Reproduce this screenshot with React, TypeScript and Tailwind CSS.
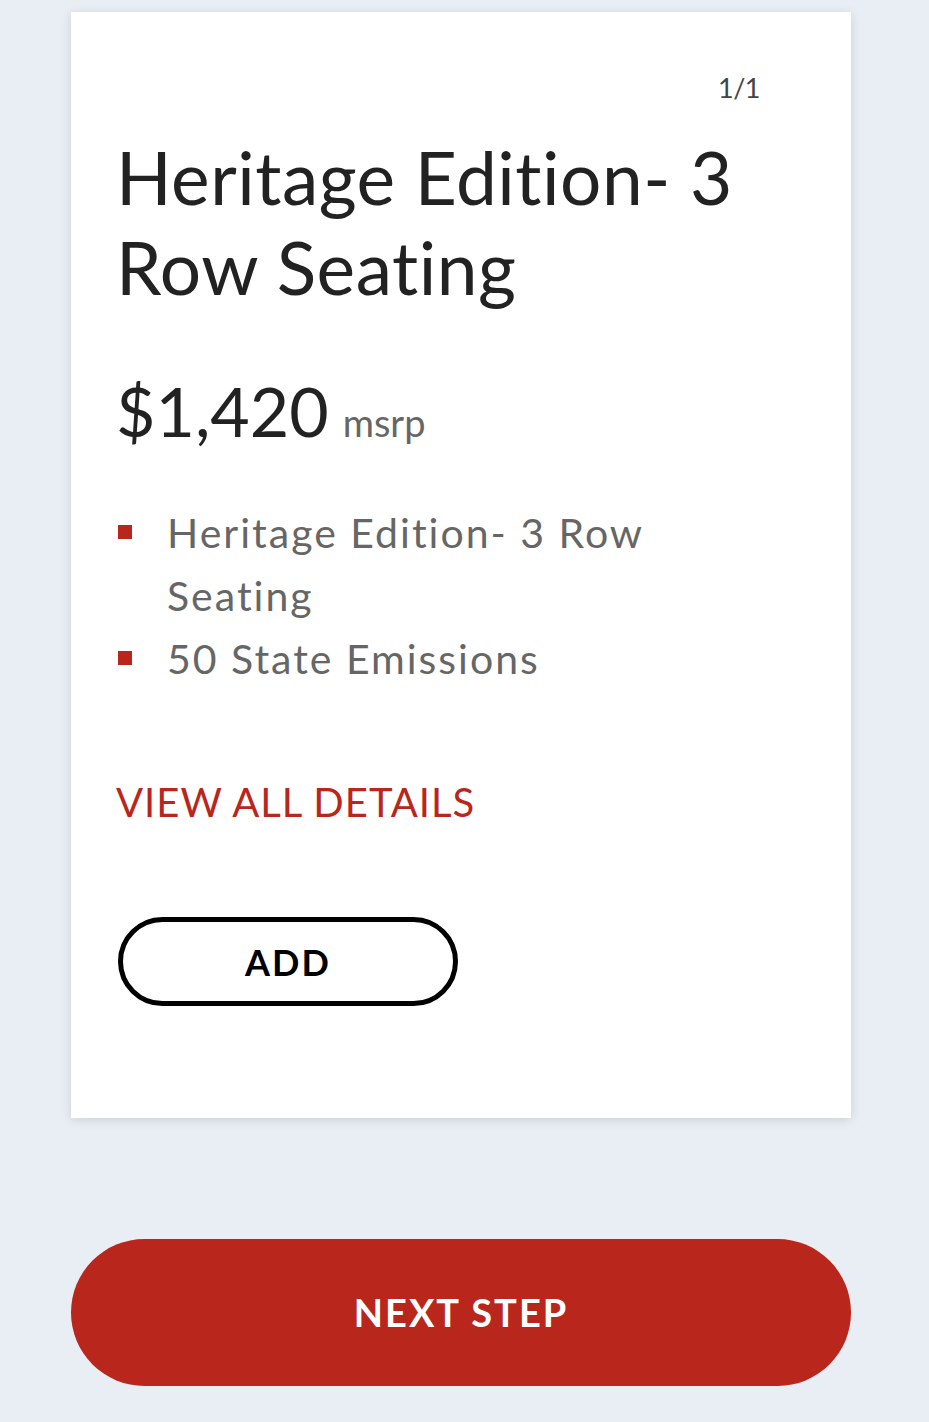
const features = ["Heritage Edition- 3 Row Seating", "50 State Emissions"];

export default function App() {
  return (
    <div className="min-h-screen bg-[#e9edf4] px-[71px] pt-[12px] pb-[36px] font-['Lato',sans-serif]">
      {/* Package card */}
      <section className="bg-white w-[780px] h-[1106px] shadow-[0_2px_10px_rgba(0,0,0,0.12)] pl-[47px] pr-[91px] pt-[54px]">
        <div className="text-right text-[27px] leading-[44px] tracking-[-0.5px] text-[#444]">1/1</div>
        <h1 className="mt-[22px] -ml-[2px] text-[73px] leading-[90px] text-[#222] tracking-[0.5px]">
          Heritage Edition- 3 Row Seating
        </h1>

        <div className="mt-[54px] -ml-[2px] flex items-baseline gap-[14px]">
          <span className="text-[68px] leading-[90px] text-[#222]">$1,420</span>
          <span className="text-[38px] text-[#666]">msrp</span>
        </div>

        <ul className="mt-[45px] w-[560px]">
          {features.map((f) => (
            <li key={f} className="flex">
              <span className="mt-[24px] mr-[35px] h-[14px] w-[14px] shrink-0 bg-[#b8261c]" />
              <span className="text-[41px] leading-[63px] tracking-[2px] text-[#666]">{f}</span>
            </li>
          ))}
        </ul>

        <a className="mt-[87px] -ml-[2px] block text-[40px] leading-[50px] tracking-[1px] text-[#b8261c]">VIEW ALL DETAILS</a>

        <button className="mt-[90px] flex h-[89px] w-[340px] items-center justify-center rounded-full border-[5px] border-black bg-white text-[36px] font-bold tracking-[2px] text-black">
          ADD
        </button>
      </section>

      <button className="mt-[121px] flex h-[147px] w-[780px] items-center justify-center rounded-full bg-[#b8261c] text-[38px] font-bold tracking-[2px] text-white">
        NEXT STEP
      </button>
    </div>
  );
}
